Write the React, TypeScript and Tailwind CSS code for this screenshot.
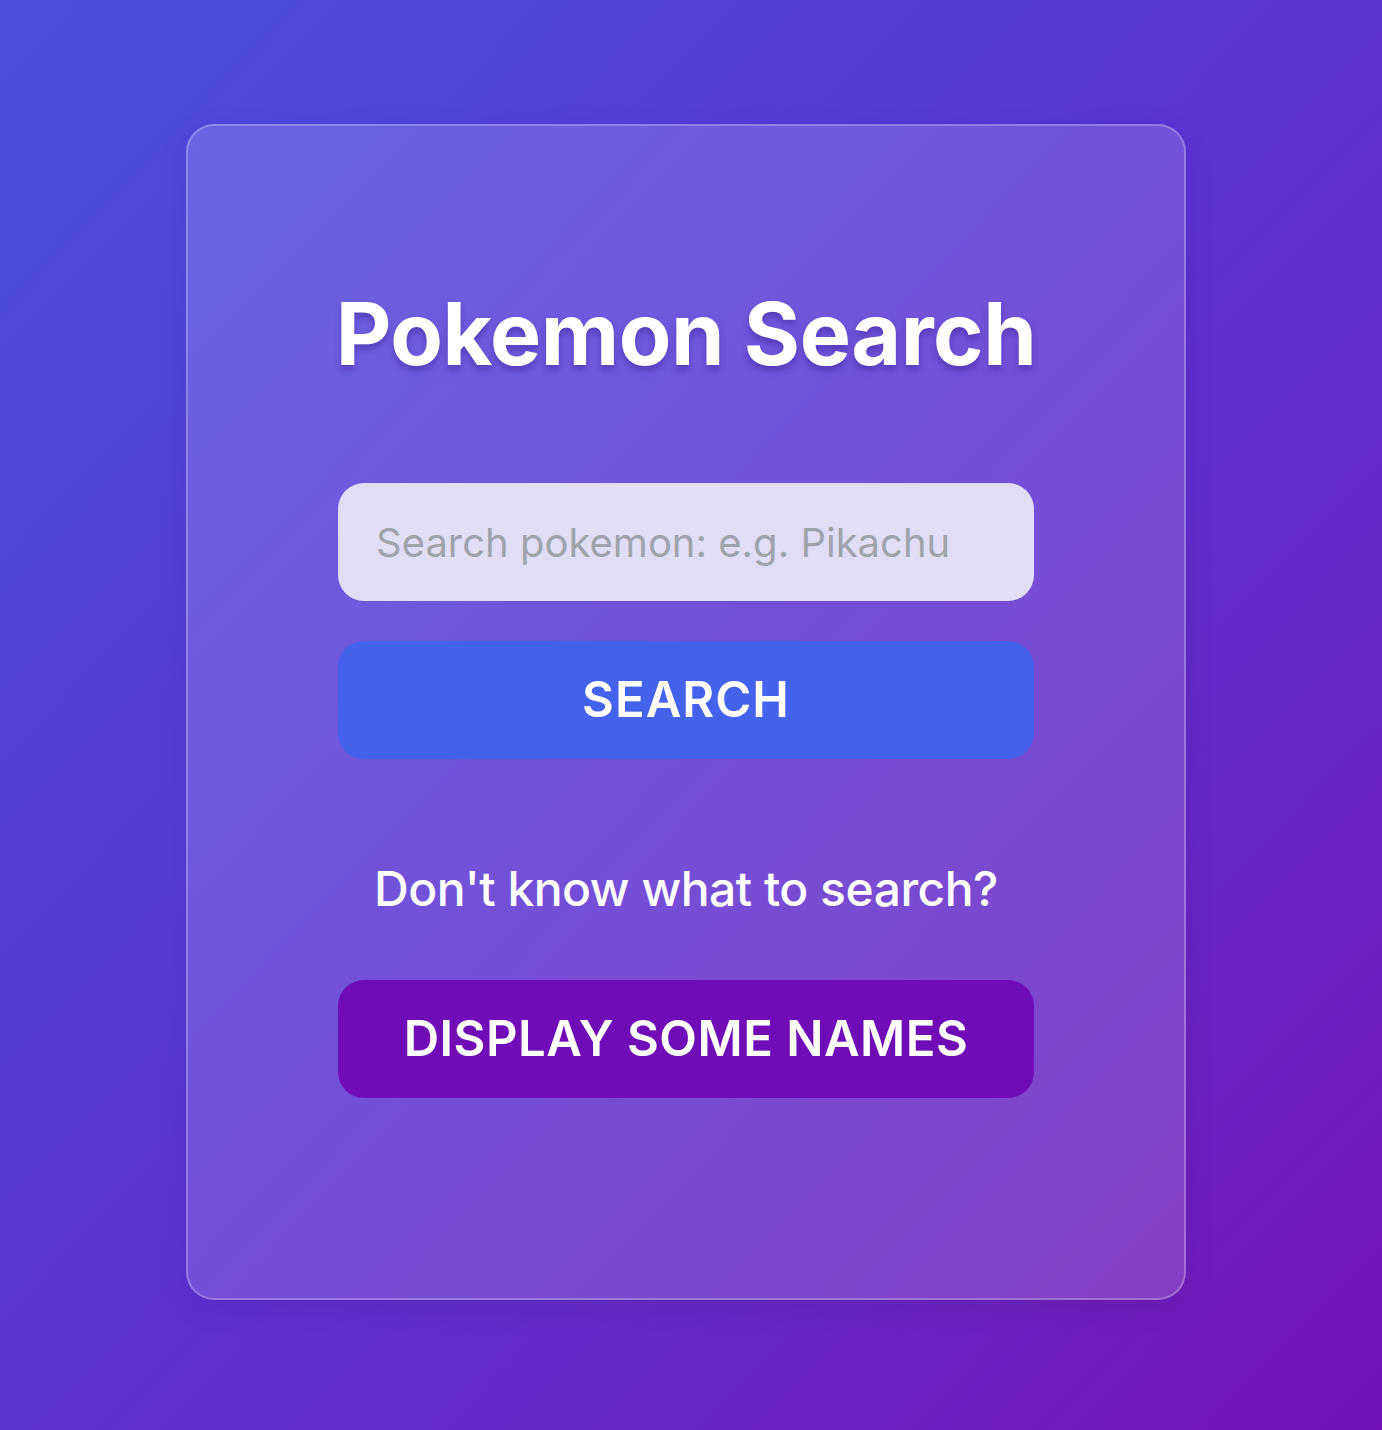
import React from "react";

export default function App() {
  return (
    <div
      className="min-h-[1430px] w-full bg-gradient-to-br from-[#4a4fe0] via-[#5a32d2] to-[#7412b6] pt-[124px]"
      style={{ fontFamily: "Inter, 'Noto Sans', sans-serif" }}
    >
      <div className="ml-[186px] flex h-[1176px] w-[1000px] flex-col items-center rounded-[28px] border-2 border-white/25 bg-white/15 pt-[158px] shadow-[0_8px_32px_rgba(0,0,0,0.08)]">
        <h1 className="text-[86px] font-bold leading-[100px] tracking-[-0.5px] text-white [text-shadow:0_5px_6px_rgba(60,30,150,0.45)]">
          Pokemon Search
        </h1>
        <div className="mt-[99px] flex w-[696px] flex-col gap-[40px]">
          <input
            type="text"
            placeholder="Search pokemon: e.g. Pikachu"
            className="h-[118px] w-full rounded-[26px] bg-[#e1ddf6] px-[38px] text-[40px] text-gray-700 outline-none placeholder:text-[#a0a3ab]"
          />
          <button className="h-[118px] w-full rounded-[26px] bg-[#4562ec] text-[49px] font-semibold tracking-[1px] text-white">
            SEARCH
          </button>
        </div>
        <p className="mt-[101px] text-[48px] font-medium leading-[58px] tracking-[-0.5px] text-white">
          Don't know what to search?
        </p>
        <button className="mt-[62px] h-[118px] w-[696px] rounded-[26px] bg-[#700cb6] text-[49px] font-semibold tracking-[0.5px] text-white">
          DISPLAY SOME NAMES
        </button>
      </div>
    </div>
  );
}
